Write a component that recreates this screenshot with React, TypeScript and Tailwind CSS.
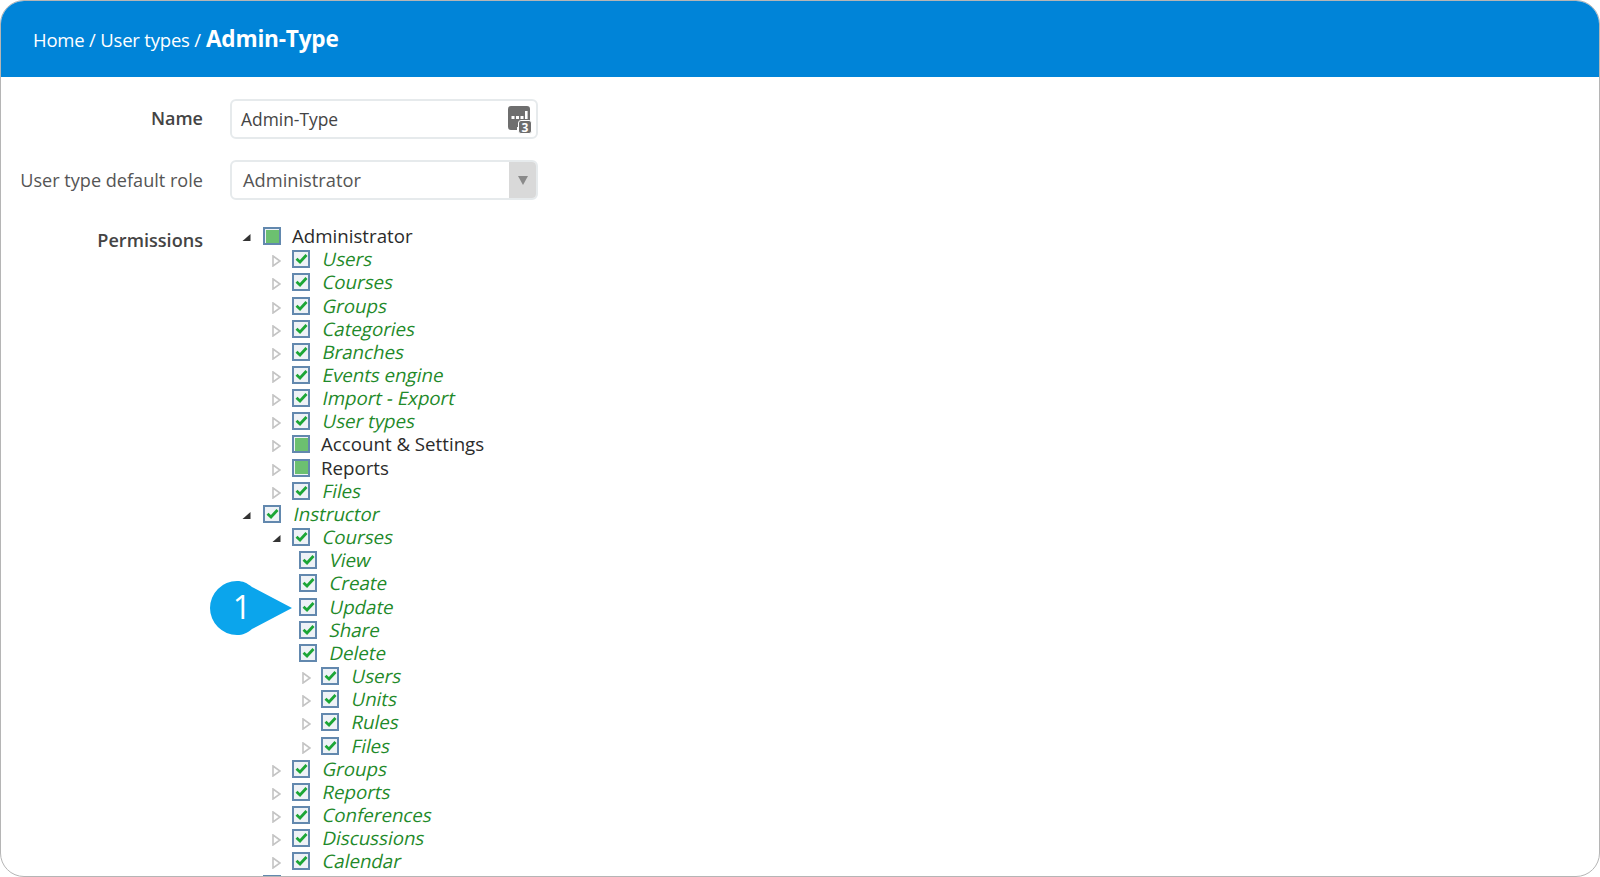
const font = { fontFamily: '"Open Sans", sans-serif' };

type Node = {
  label: string;
  indent: "top" | "sub" | "leaf" | "deep";
  state?: "checked" | "partial";
  open?: boolean;
  plain?: boolean;
};

const nodes: Node[] = [
  { label: "Administrator", indent: "top", state: "partial", open: true, plain: true },
  { label: "Users", indent: "sub" },
  { label: "Courses", indent: "sub" },
  { label: "Groups", indent: "sub" },
  { label: "Categories", indent: "sub" },
  { label: "Branches", indent: "sub" },
  { label: "Events engine", indent: "sub" },
  { label: "Import - Export", indent: "sub" },
  { label: "User types", indent: "sub" },
  { label: "Account & Settings", indent: "sub", state: "partial", plain: true },
  { label: "Reports", indent: "sub", state: "partial", plain: true },
  { label: "Files", indent: "sub" },
  { label: "Instructor", indent: "top", open: true },
  { label: "Courses", indent: "sub", open: true },
  { label: "View", indent: "leaf" },
  { label: "Create", indent: "leaf" },
  { label: "Update", indent: "leaf" },
  { label: "Share", indent: "leaf" },
  { label: "Delete", indent: "leaf" },
  { label: "Users", indent: "deep" },
  { label: "Units", indent: "deep" },
  { label: "Rules", indent: "deep" },
  { label: "Files", indent: "deep" },
  { label: "Groups", indent: "sub" },
  { label: "Reports", indent: "sub" },
  { label: "Conferences", indent: "sub" },
  { label: "Discussions", indent: "sub" },
  { label: "Calendar", indent: "sub" },
  { label: "", indent: "top", state: "partial", plain: true },
];

const indentClass = {
  top: "pl-[12px]",
  sub: "pl-[42px]",
  leaf: "pl-[69px]",
  deep: "pl-[72px]",
};

const arrowSlot = {
  top: "flex w-[21px] justify-start",
  sub: "flex w-[20px] justify-start",
  leaf: "",
  deep: "flex w-[19px] justify-start",
};

function Arrow({ open }: { open?: boolean }) {
  if (open) {
    return (
      <svg width="9" height="9" viewBox="0 0 9 9" className="mt-[3px]">
        <path d="M8.5 1 L8.5 8 L0.5 8 Z" fill="#333333" />
      </svg>
    );
  }
  return (
    <svg width="9" height="12" viewBox="0 0 9 12" className="mt-[4px]">
      <path d="M1 1 L8 6 L1 11 Z" fill="#ffffff" stroke="#c4c4c4" strokeWidth="1.6" />
    </svg>
  );
}

function Check({ state }: { state: "checked" | "partial" }) {
  return (
    <span className="flex h-[18px] w-[18px] shrink-0 items-center justify-center border-2 border-[#6288ae] bg-[#eef2f6]">
      {state === "partial" ? (
        <span className="h-[13px] w-[13px] bg-[#6cc070]" />
      ) : (
        <svg width="13" height="12" viewBox="0 0 13 12">
          <path d="M1.5 5.8 L5 9 L11.5 2" fill="none" stroke="#1ca636" strokeWidth="2.8" />
        </svg>
      )}
    </span>
  );
}

function TreeRow({ node }: { node: Node }) {
  const state = node.state ?? "checked";
  return (
    <div className={`flex h-[23.17px] items-center ${indentClass[node.indent]}`}>
      {node.indent !== "leaf" && (
        <span className={arrowSlot[node.indent]}>
          <Arrow open={node.open} />
        </span>
      )}
      <Check state={state} />
      <span
        className={
          node.plain
            ? "ml-[11px] text-[18.7px] text-[#2b2b2b]"
            : "ml-[13px] inline-block -skew-x-12 text-[18.7px] text-[#1f8a2a]"
        }
      >
        {node.label}
      </span>
    </div>
  );
}

function MessageIcon() {
  return (
    <svg width="24" height="28" viewBox="0 0 24 28" className="absolute right-[4px] top-[5px]">
      <path d="M3 0 H19 Q22 0 22 3 V18 Q22 21 19 21 H9 V24 H3 Q0 24 0 21 V3 Q0 0 3 0 Z" fill="#6e6e6e" />
      <rect x="3.5" y="10" width="3" height="3" fill="#ffffff" />
      <rect x="8" y="10" width="3" height="3" fill="#ffffff" />
      <rect x="12.5" y="10" width="3" height="3" fill="#ffffff" />
      <rect x="17" y="5" width="2.6" height="8" fill="#ffffff" />
      <rect x="10.5" y="14.5" width="13" height="13" rx="2.5" fill="#6e6e6e" stroke="#ffffff" strokeWidth="1" />
      <text x="17" y="25.5" textAnchor="middle" fontSize="12" fontWeight="700" fill="#ffffff" fontFamily="Open Sans, sans-serif">
        3
      </text>
    </svg>
  );
}

function Callout() {
  return (
    <div className="absolute left-[209px] top-[580px] h-[54px] w-[84px]">
      <svg width="84" height="54" viewBox="0 0 84 54" className="absolute inset-0">
        <path d="M27 0 C33 0 37 2 42 6 L82 27 L42 48 C37 52 33 54 27 54 A27 27 0 0 1 27 0 Z" fill="#0ba5ec" />
      </svg>
      <span className="absolute left-[5px] top-[-1px] flex h-[54px] w-[54px] items-center justify-center text-[32px] text-white">
        1
      </span>
    </div>
  );
}

export default function App() {
  return (
    <div className="h-[877px] w-[1600px] bg-white" style={font}>
      <div className="relative h-full w-full overflow-hidden rounded-[24px] border border-[#b5b5b5] bg-white">
        <div className="flex h-[76px] items-center bg-[#0084d8] pl-[32px] text-white">
          <span className="pt-[2px] text-[18.5px] tracking-[-0.2px]">Home / User types /</span>
          <span className="ml-[5px] text-[22.6px] font-bold tracking-[-0.2px]">Admin-Type</span>
        </div>

        <div className="grid grid-cols-[202px_1fr] gap-x-[27px] pt-[22px]">
          <div className="flex h-[39px] items-center justify-end text-[18px] font-semibold text-[#444444]">Name</div>
          <div className="relative flex h-[40px] w-[308px] items-center rounded-[6px] border-2 border-[#e6eaec] pl-[9px] text-[17.4px] text-[#444444]">
            Admin-Type
            <MessageIcon />
          </div>

          <div className="mt-[21px] flex h-[40px] items-center justify-end pt-[1px] text-[18.1px] text-[#555555]">
            User type default role
          </div>
          <div className="mt-[21px] flex h-[40px] w-[308px] items-center justify-between overflow-hidden rounded-[6px] border-2 border-[#e6eaec] text-[18.3px] text-[#555555]">
            <span className="pl-[11px]">Administrator</span>
            <span className="flex h-full w-[27px] items-center justify-center bg-[#d9d9d9]">
              <svg width="10" height="9" viewBox="0 0 10 9">
                <path d="M0 0 H10 L5 9 Z" fill="#8a8a8a" />
              </svg>
            </span>
          </div>

          <div className="mt-[25px] flex h-[23px] items-center justify-end pt-[9px] text-[18.1px] font-semibold text-[#444444]">
            Permissions
          </div>
          <div className="mt-[24.5px] flex flex-col">
            {nodes.map((node, i) => (
              <TreeRow key={i} node={node} />
            ))}
          </div>
        </div>

        <Callout />
      </div>
    </div>
  );
}
